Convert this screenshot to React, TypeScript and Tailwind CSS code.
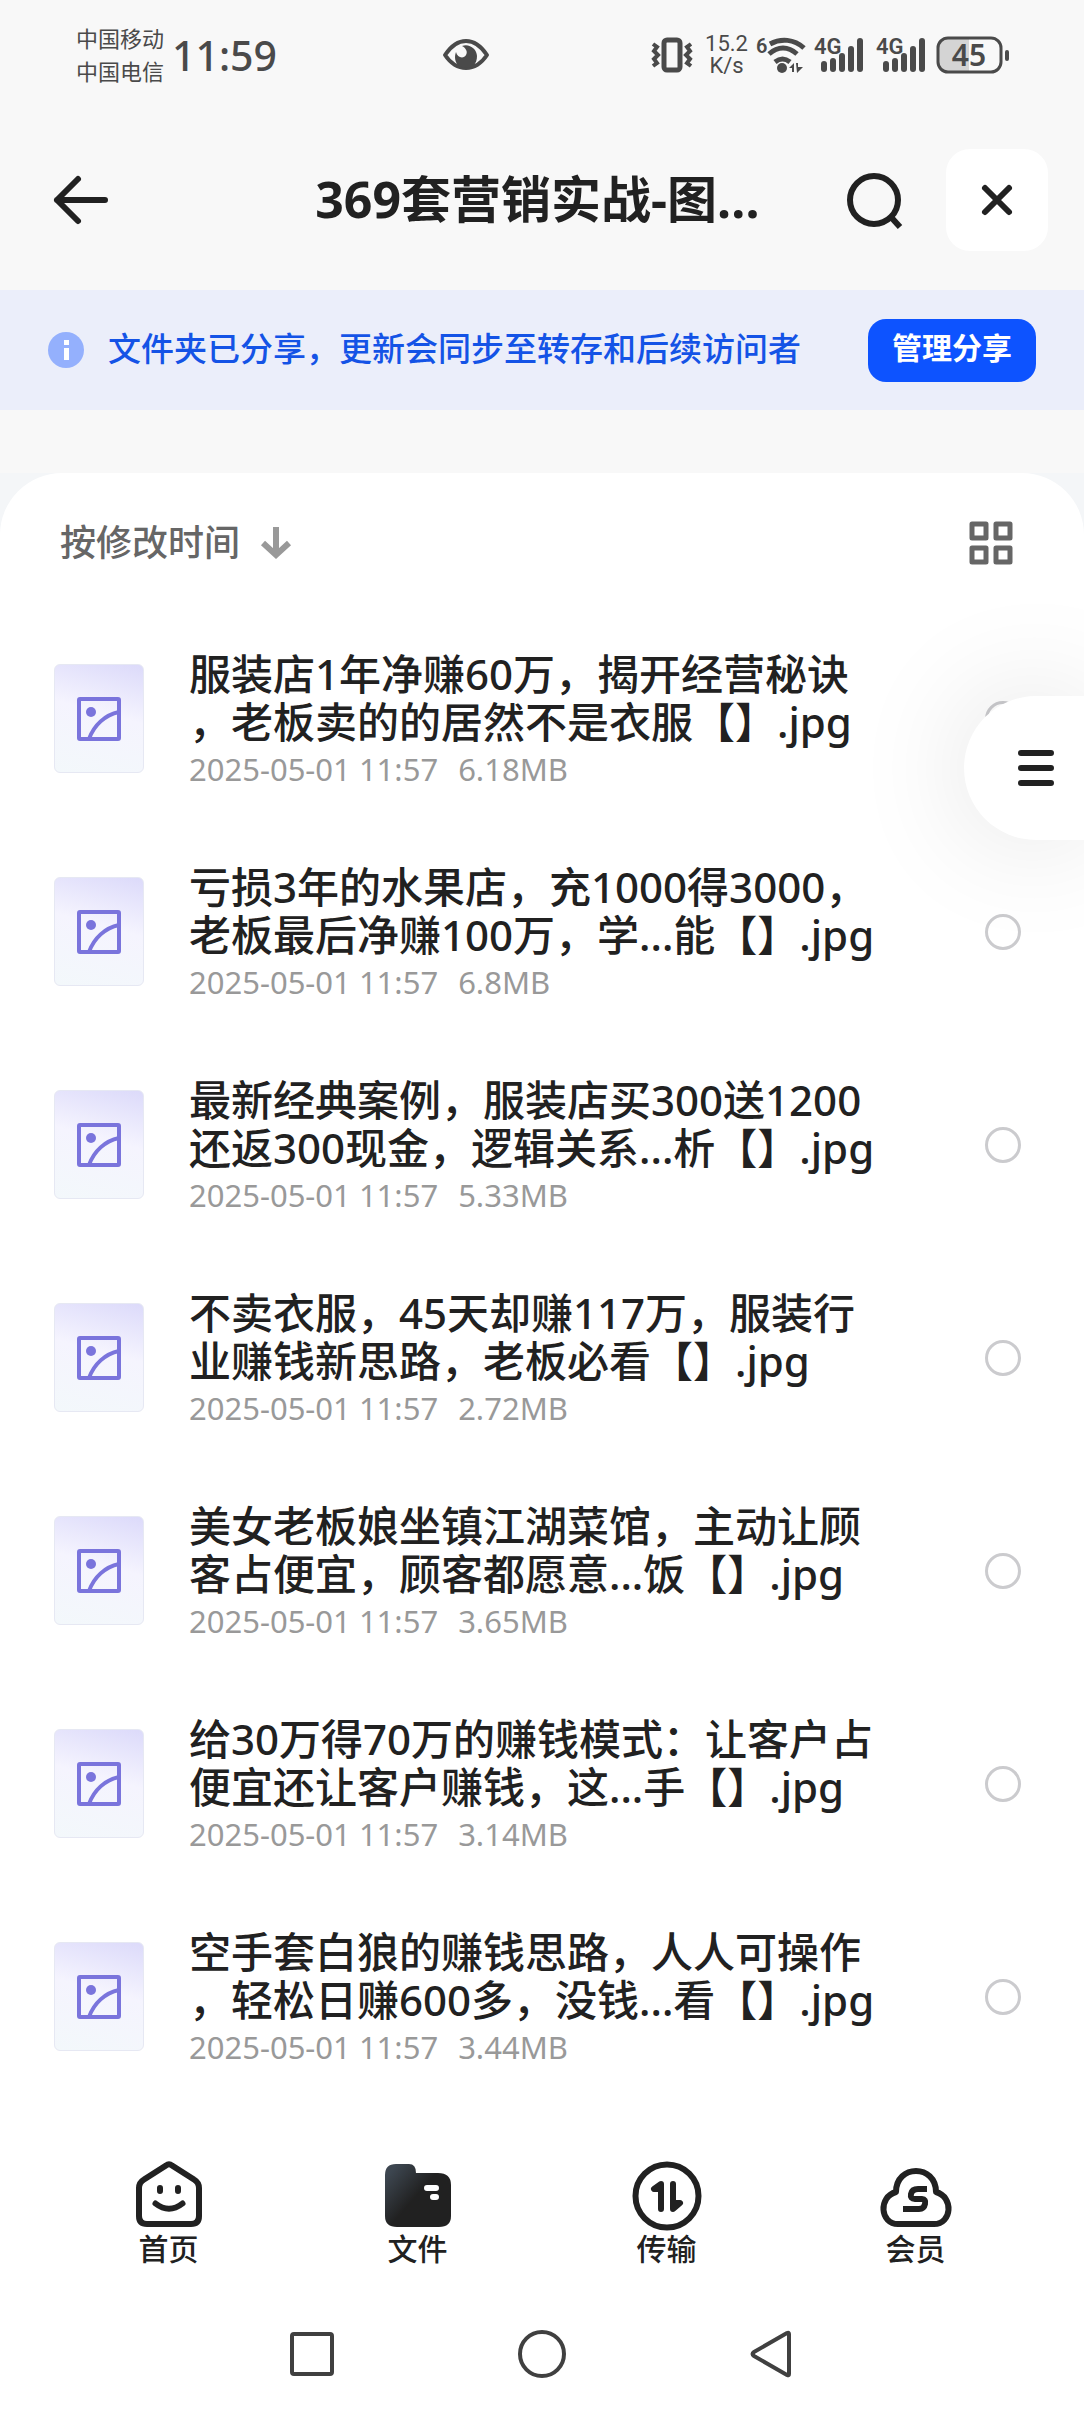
import React from 'react';

interface FileItem {
  id: number;
  name: string;
  date: string;
  size: string;
}

const files: FileItem[] = [
  { id: 1, name: '服装店1年净赚60万，揭开经营秘诀\n，老板卖的的居然不是衣服【】.jpg', date: '2025-05-01 11:57', size: '6.18MB' },
  { id: 2, name: '亏损3年的水果店，充1000得3000，\n老板最后净赚100万，学...能【】.jpg', date: '2025-05-01 11:57', size: '6.8MB' },
  { id: 3, name: '最新经典案例，服装店买300送1200\n还返300现金，逻辑关系...析【】.jpg', date: '2025-05-01 11:57', size: '5.33MB' },
  { id: 4, name: '不卖衣服，45天却赚117万，服装行\n业赚钱新思路，老板必看【】.jpg', date: '2025-05-01 11:57', size: '2.72MB' },
  { id: 5, name: '美女老板娘坐镇江湖菜馆，主动让顾\n客占便宜，顾客都愿意...饭【】.jpg', date: '2025-05-01 11:57', size: '3.65MB' },
  { id: 6, name: '给30万得70万的赚钱模式：让客户占\n便宜还让客户赚钱，这...手【】.jpg', date: '2025-05-01 11:57', size: '3.14MB' },
  { id: 7, name: '空手套白狼的赚钱思路，人人可操作\n，轻松日赚600多，没钱...看【】.jpg', date: '2025-05-01 11:57', size: '3.44MB' },
];

function SignalIcon() {
  return (
    <svg width="52" height="52" viewBox="0 -8 52 52" fill="currentColor">
      <text x="0" y="17" fontSize="22" fontWeight="600" fontFamily="Roboto, sans-serif">4G</text>
      <rect x="7" y="24" width="6" height="11" rx="3" />
      <rect x="16" y="21" width="6" height="14" rx="3" />
      <rect x="25" y="16" width="6" height="19" rx="3" />
      <rect x="34" y="9" width="6" height="26" rx="3" />
      <rect x="43" y="1" width="6" height="34" rx="3" />
    </svg>
  );
}

function StatusBar() {
  return (
    <div className="flex h-[110px] items-center pl-[76px] pr-[74px] text-[#4a4a4a]">
      <div className="flex w-[366px] shrink-0 items-center gap-2">
        <div className="text-[22px] leading-[33px]">
          <div>中国移动</div>
          <div>中国电信</div>
        </div>
        <time className="text-[41px] leading-[48px] font-medium">11:59</time>
      </div>
      <svg width="48" height="34" viewBox="0 0 48 34">
        <path d="M3 17C9 8 16 3 24 3s15 5 21 14c-6 9-13 13-21 13S9 26 3 17z" fill="none" stroke="currentColor" strokeWidth="4" strokeLinejoin="round" />
        <path d="M20 8C27 5 35 11 35 18c0 4-1 7-4 10q-7 3-14 0C13 25 12 19 14 14c1 6 8 7 10 3 2-3 0-7-4-9z" fill="currentColor" />
      </svg>
      <div className="flex flex-1 items-center justify-end">
        <svg width="42" height="36" viewBox="0 0 42 36" fill="none" stroke="currentColor" strokeWidth="4">
          <rect x="13" y="3" width="16" height="30" rx="3" strokeWidth="5" />
          <path d="M2 7l4 3-3 4 4 4-4 4 3 4-4 3M40 7l-4 3 3 4-4 4 4 4-3 4 4 3" />
        </svg>
        <div className="ml-3 text-center font-[Roboto] text-[22px] leading-[22px]">
          <div>15.2</div>
          <div>K/s</div>
        </div>
        <svg className="ml-2" width="50" height="52" viewBox="0 -8 50 52" fill="none" stroke="currentColor" strokeWidth="5">
          <text x="0" y="16" fontSize="20" fontWeight="600" fill="currentColor" stroke="none" fontFamily="Roboto, sans-serif">6</text>
          <path d="M14 7c11-6 24-5 34 4M13 17c9-8 19-8 28 0M19 25c5-4 10-4 15 0" />
          <circle cx="26" cy="31" r="5" fill="currentColor" stroke="none" />
          <path d="M33 31l5-5v9h-2v-4zM40 26h2v4h5l-6 6z" fill="currentColor" stroke="none" />
        </svg>
        <div className="ml-2 flex gap-[10px]">
          <SignalIcon />
          <SignalIcon />
        </div>
        <svg className="ml-2" width="74" height="52" viewBox="0 -7 74 52">
          <path d="M11 3h22v32H11a8 8 0 0 1-8-8V11a8 8 0 0 1 8-8z" fill="#d4d4d4" />
          <rect x="2" y="2" width="63" height="34" rx="10" fill="none" stroke="currentColor" strokeWidth="3" />
          <rect x="69" y="14" width="4" height="11" rx="2" fill="currentColor" />
          <text x="33" y="30" textAnchor="middle" fontSize="30" fontWeight="600" fill="currentColor">45</text>
        </svg>
      </div>
    </div>
  );
}

function Header() {
  return (
    <header className="flex items-center pt-[39px] pr-[36px] pb-[39px] pl-[51px]">
      <button type="button" aria-label="返回">
        <svg width="60" height="60" viewBox="0 0 60 60" fill="none" stroke="currentColor" strokeWidth="6" strokeLinecap="round" strokeLinejoin="round">
          <path d="M27 9L6 30l21 21M6 30h48" />
        </svg>
      </button>
      <h1 className="flex-1 pb-0.5 pl-[120px] text-center text-[50px] leading-[60px] font-bold">369套营销实战-图…</h1>
      <button type="button" aria-label="搜索">
        <svg width="60" height="60" viewBox="0 0 60 60" fill="none" stroke="currentColor" strokeWidth="6">
          <circle cx="30" cy="30" r="24" />
          <path d="M46 46l10 11" />
        </svg>
      </button>
      <button type="button" aria-label="关闭" className="ml-[42px] flex size-[102px] items-center justify-center rounded-3xl bg-white">
        <svg width="36" height="36" viewBox="0 0 36 36" stroke="currentColor" strokeWidth="6" strokeLinecap="round">
          <path d="M6 6l24 24M30 6L6 30" />
        </svg>
      </button>
    </header>
  );
}

function ShareBanner() {
  return (
    <div className="flex h-[120px] items-center bg-[#ebeefa] pr-12 pl-12">
      <svg width="36" height="36" viewBox="0 0 36 36">
        <circle cx="18" cy="18" r="18" fill="#94b0fd" />
        <path d="M16 8h5v5h-5zM16 16h5v12h-5z" fill="#fff" />
      </svg>
      <p className="ml-6 flex-1 pb-0.5 text-[33px] leading-[40px] font-medium text-[#1453e6]">文件夹已分享，更新会同步至转存和后续访问者</p>
      <button type="button" className="h-[63px] w-[168px] rounded-[18px] bg-[#0d53ff] pb-1.5 text-[30px] font-bold text-white">管理分享</button>
    </div>
  );
}

function FileIcon() {
  return (
    <span className="flex h-[109px] w-[90px] shrink-0 items-center justify-center rounded-md border border-[#e6e8f3] bg-linear-195 from-[#dcdafa] via-[#f5f4fe] via-45% to-[#f3f8fb]">
      <svg width="44" height="44" viewBox="0 0 44 44" fill="none" stroke="#7a74dc" strokeWidth="4">
        <rect x="2" y="2" width="40" height="40" rx="1" />
        <circle cx="14" cy="15" r="5" fill="#7a74dc" stroke="none" />
        <path d="M12 42C17 28 28 18 42 15" />
      </svg>
    </span>
  );
}

function FileRow({ file }: { file: FileItem }) {
  return (
    <li>
      <label className="flex h-[213px] items-center pr-[63px] pl-[54px]">
        <FileIcon />
        <span className="ml-[45px] flex-1 pb-0.5">
          <span className="block text-[42px] leading-[48px] font-medium whitespace-pre">{file.name}</span>
          <span className="mt-[6px] flex gap-5 text-[31px] leading-[34px] text-[#999]">
            <span>{file.date}</span>
            <span>{file.size}</span>
          </span>
        </span>
        <input type="checkbox" className="size-9 shrink-0 appearance-none rounded-full border-3 border-[#cbcbce] checked:bg-[#0d53ff]" />
      </label>
    </li>
  );
}

function TabBar() {
  return (
    <nav className="grid grid-cols-4 px-11 pt-[57px] text-[30px] leading-[34px] font-medium">
      <a href="#home" className="flex flex-col items-center">
        <svg width="72" height="72" viewBox="0 0 72 72" fill="none" stroke="currentColor" strokeWidth="6" strokeLinecap="round" strokeLinejoin="round">
          <path d="M33 5.500Q36 3 39 5.500L61 19.500Q66 22.500 66 28V56Q66 64 58 64H14Q6 64 6 56V28Q6 22.500 11 19.500z" />
          <path d="M27 28v3M45 28v3M22.500 43.500Q36 54 49.500 43.500" />
        </svg>
        <span>首页</span>
      </a>
      <a href="#files" className="flex flex-col items-center">
        <svg width="72" height="72" viewBox="0 0 72 72">
          <defs>
            <linearGradient id="folder" x1="0" y1="0.1" x2="0.6" y2="0.6">
              <stop offset="0.1" stopColor="#3d4650" />
              <stop offset="0.8" stopColor="#212121" />
            </linearGradient>
          </defs>
          <path d="M14 4h13q7 0 7 9h22q13 0 13 12v31q0 11-12 11H15Q3 67 3 56V15Q3 4 14 4z" fill="url(#folder)" />
          <path d="M45 28h9M51 37h3" stroke="#fff" strokeWidth="6" strokeLinecap="round" />
        </svg>
        <span>文件</span>
      </a>
      <a href="#transfer" className="flex flex-col items-center">
        <svg width="72" height="72" viewBox="0 0 72 72" fill="none" stroke="currentColor" strokeWidth="6" strokeLinecap="round" strokeLinejoin="round">
          <circle cx="36" cy="36" r="31.500" />
          <path d="M30 49V24l-7 5h7M42 24v25l7-6h-7" />
        </svg>
        <span>传输</span>
      </a>
      <a href="#vip" className="flex flex-col items-center">
        <svg width="72" height="72" viewBox="0 0 72 72" fill="none" stroke="currentColor" strokeWidth="6" strokeLinejoin="round">
          <path d="M18 64C0 64-2 37 16 32C16 4 56 4 56 32C74 37 72 64 54 64z" />
          <path d="M47 29H38q-6 0-7 5t4 5h7q4 0 3 5t-6 5H23" strokeWidth="6" />
        </svg>
        <span>会员</span>
      </a>
    </nav>
  );
}

function SystemNav() {
  return (
    <div className="mx-auto grid w-[690px] grid-cols-3 justify-items-center pt-[64px] pb-[34px] text-[#404040]">
      <button type="button" aria-label="最近任务">
        <svg width="48" height="48" viewBox="0 0 48 48" fill="none" stroke="currentColor" strokeWidth="4">
          <rect x="4" y="4" width="40" height="40" rx="2" />
        </svg>
      </button>
      <button type="button" aria-label="主屏幕">
        <svg width="48" height="48" viewBox="0 0 48 48" fill="none" stroke="currentColor" strokeWidth="4">
          <circle cx="24" cy="24" r="22" />
        </svg>
      </button>
      <button type="button" aria-label="后退">
        <svg width="48" height="48" viewBox="0 0 48 48" fill="none" stroke="currentColor" strokeWidth="4" strokeLinejoin="round">
          <path d="M41 4v40q0 2-2 1L6 26q-3-2 0-4L39 3q2-1 2 1z" />
        </svg>
      </button>
    </div>
  );
}

export default function App() {
  return (
    <div className="flex min-h-screen flex-col overflow-hidden bg-[#f8f8f8] font-['Noto_Sans','Noto_Sans_CJK_SC',sans-serif] text-[#212121]">
      <StatusBar />
      <Header />
      <ShareBanner />
      <div className="mt-[63px] flex flex-1 flex-col bg-[#f4f6f8]">
        <main className="relative flex-1 rounded-t-[62px] bg-white">
          <div className="flex h-[139px] items-center justify-between pr-[69px] pl-[60px]">
            <button type="button" className="flex items-center gap-5 text-[36px] leading-[44px] font-medium text-[#666]">
              按修改时间
              <svg width="32" height="34" viewBox="0 0 32 34" fill="none" stroke="#999" strokeWidth="6">
                <path d="M16 1v28M3 17l13 12 13-12" />
              </svg>
            </button>
            <button type="button" aria-label="网格视图">
              <svg width="48" height="48" viewBox="0 0 48 48" fill="none" stroke="#666" strokeWidth="5" strokeLinejoin="round">
                <path d="M5 5h14v14H5zM29 5h14v14H29zM5 29h14v14H5zM29 29h14v14H29z" />
              </svg>
            </button>
          </div>
          <ul>
            {files.map((file) => (
              <FileRow key={file.id} file={file} />
            ))}
          </ul>
          <button
            type="button"
            aria-label="菜单"
            className="absolute top-[223px] right-0 flex h-36 w-[120px] items-center justify-start rounded-l-full bg-white pl-[54px] shadow-[0_0_120px_rgba(0,0,0,0.12)]"
          >
            <svg width="36" height="36" viewBox="0 0 36 36" stroke="currentColor" strokeWidth="6" strokeLinecap="round">
              <path d="M3 3h30M3 18h30M3 33h30" />
            </svg>
          </button>
          <TabBar />
          <SystemNav />
        </main>
      </div>
    </div>
  );
}
